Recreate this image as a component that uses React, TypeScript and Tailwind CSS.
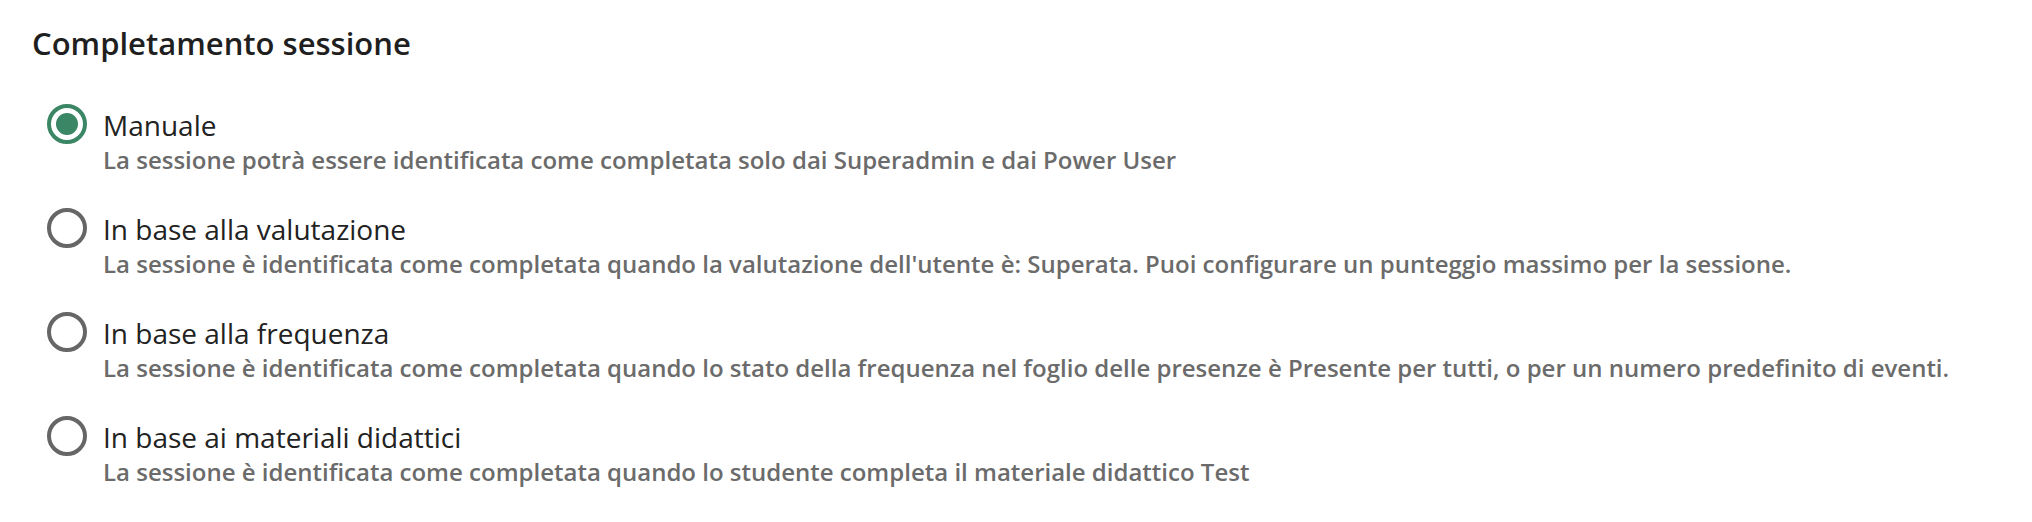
import React from "react";

const options = [
  {
    label: "Manuale",
    desc: "La sessione potrà essere identificata come completata solo dai Superadmin e dai Power User",
    checked: true,
  },
  {
    label: "In base alla valutazione",
    desc: "La sessione è identificata come completata quando la valutazione dell'utente è: Superata. Puoi configurare un punteggio massimo per la sessione.",
    checked: false,
  },
  {
    label: "In base alla frequenza",
    desc: "La sessione è identificata come completata quando lo stato della frequenza nel foglio delle presenze è Presente per tutti, o per un numero predefinito di eventi.",
    checked: false,
  },
  {
    label: "In base ai materiali didattici",
    desc: "La sessione è identificata come completata quando lo studente completa il materiale didattico Test",
    checked: false,
  },
];

export default function App() {
  return (
    <div className="w-[2032px] h-[522px] bg-white px-[32px] pt-[23px]" style={{ fontFamily: '"Open Sans", sans-serif' }}>
      <h2 className="text-[31px] font-semibold text-[#1f1f1f] leading-[40px]">Completamento sessione</h2>
      <div className="mt-[42px] flex flex-col gap-[32px]">
        {options.map((o) => (
          <div key={o.label} className="flex items-start gap-[16px] pl-[15px]">
            <div
              className={
                o.checked
                  ? "mt-[-1px] w-[40px] h-[40px] rounded-full border-[4px] border-[#3b8765] flex items-center justify-center shrink-0"
                  : "mt-[-1px] w-[40px] h-[40px] rounded-full border-[4px] border-[#666666] flex items-center justify-center shrink-0"
              }
            >
              {o.checked && <div className="w-[22px] h-[22px] rounded-full bg-[#3b8765]" />}
            </div>
            <div className="flex flex-col pt-[2px]">
              <div className="text-[28px] leading-[36px] text-[#222222]">{o.label}</div>
              <div className="text-[24px] leading-[34px] font-semibold text-[#6b6b6b]">{o.desc}</div>
            </div>
          </div>
        ))}
      </div>
    </div>
  );
}
